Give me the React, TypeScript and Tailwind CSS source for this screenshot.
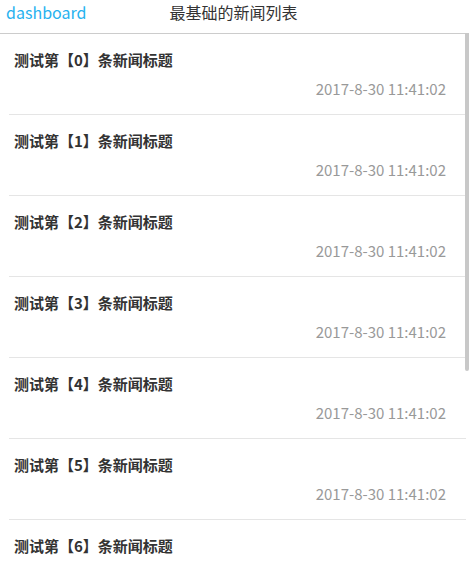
import React from 'react';

const news = Array.from({ length: 7 }, (_, i) => ({
  id: i,
  title: `测试第【${i}】条新闻标题`,
  time: '2017-8-30 11:41:02',
}));

export default function App() {
  return (
    <div
      className="relative h-[569px] w-[470px] overflow-hidden bg-white"
      style={{ fontFamily: '"Noto Sans CJK SC", "Noto Sans", sans-serif' }}
    >
      {/* Header */}
      <header className="flex h-[34px] w-[466px] items-start border-b border-[#cccccc]">
        <a className="ml-[6px] mt-[1px] text-[16px] leading-[22px] text-[#27b2ef]">dashboard</a>
        <h1 className="ml-[83px] mt-[1px] text-[16px] leading-[22px] text-[#333]">最基础的新闻列表</h1>
      </header>

      {/* List */}
      <ul className="ml-[9px] w-[457px]">
        {news.map((item) => (
          <li key={item.id} className="flex h-[81px] flex-col border-b border-[#e5e5e5] px-[5px]">
            <div className="mt-[16px] text-[15px] font-semibold leading-[20px] text-[#333]">{item.title}</div>
            <div className="mt-[9px] self-end pr-[15px] text-[15px] leading-[20px] text-[#999]">{item.time}</div>
          </li>
        ))}
      </ul>

      {/* Scrollbar thumb */}
      <div className="absolute right-[1px] top-[33px] h-[338px] w-[4px] rounded-b-sm bg-[#c8c8c8]" />
    </div>
  );
}
